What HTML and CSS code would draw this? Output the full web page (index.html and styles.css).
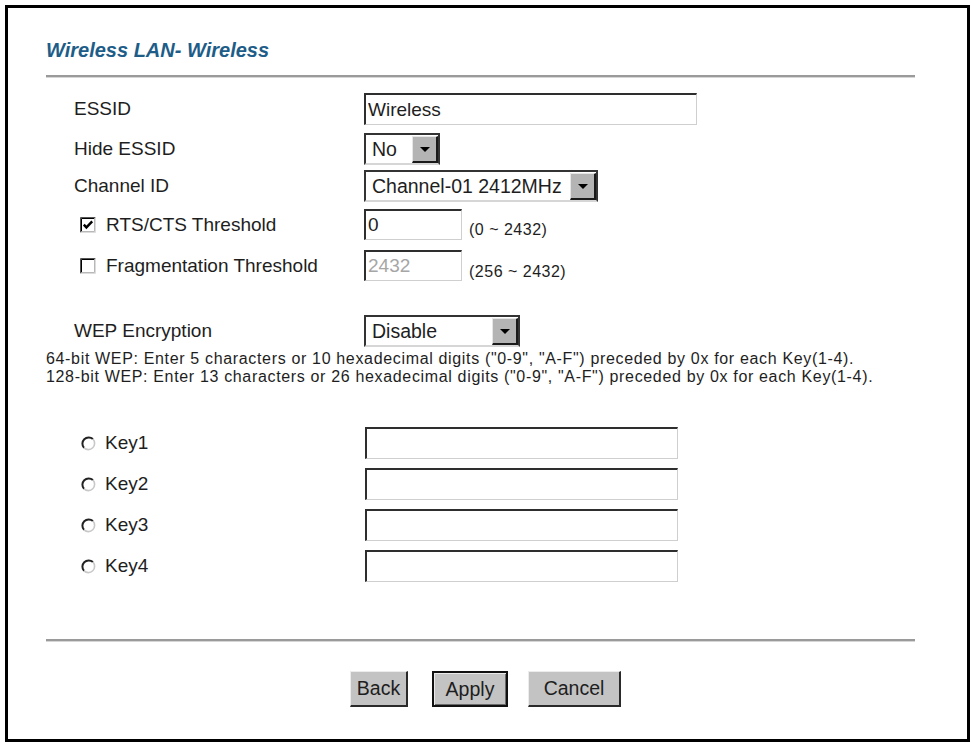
FILE: index.html
```html
<!DOCTYPE html>
<html lang="en">
<head>
<meta charset="utf-8">
<title>Wireless LAN- Wireless</title>
<link rel="stylesheet" href="styles.css">
</head>
<body>
<div class="frame">
  <h1 class="title">Wireless LAN- Wireless</h1>
  <div class="rule"></div>

  <div class="form">
    <div class="row">
      <div class="label">ESSID</div>
      <input class="text w-essid" type="text" value="Wireless">
    </div>
    <div class="row r-hide">
      <div class="label">Hide ESSID</div>
      <div class="select w-no"><span class="val">No</span><span class="arrow"><i></i></span></div>
    </div>
    <div class="row r-channel">
      <div class="label">Channel ID</div>
      <div class="select w-channel"><span class="val">Channel-01 2412MHz</span><span class="arrow"><i></i></span></div>
    </div>
    <div class="row r-rts">
      <div class="label label-check">
        <svg class="checkbox" width="16" height="16" viewBox="0 0 16 16">
          <rect x="0" y="0" width="16" height="16" fill="#ffffff"/>
          <path d="M0.5 15.5V0.5H15.5" fill="none" stroke="#555"/>
          <path d="M1.5 14.5V1.5H14.5" fill="none" stroke="#000"/>
          <path d="M0.5 15.5H15.5V0.5" fill="none" stroke="#dcdcdc"/>
          <path d="M1.5 14.5H14.5V1.5" fill="none" stroke="#b8b8b8"/>
          <path d="M3.8 7.6L6.4 10.4L12.2 4.4" fill="none" stroke="#000" stroke-width="2.4"/>
        </svg>
        <span>RTS/CTS Threshold</span>
      </div>
      <input class="text w-num" type="text" value="0">
      <span class="range">(0 ~ 2432)</span>
    </div>
    <div class="row r-frag">
      <div class="label label-check">
        <svg class="checkbox" width="16" height="16" viewBox="0 0 16 16">
          <rect x="0" y="0" width="16" height="16" fill="#ffffff"/>
          <path d="M0.5 15.5V0.5H15.5" fill="none" stroke="#555"/>
          <path d="M1.5 14.5V1.5H14.5" fill="none" stroke="#000"/>
          <path d="M0.5 15.5H15.5V0.5" fill="none" stroke="#dcdcdc"/>
          <path d="M1.5 14.5H14.5V1.5" fill="none" stroke="#b8b8b8"/>
        </svg>
        <span>Fragmentation Threshold</span>
      </div>
      <input class="text w-num disabled" type="text" value="2432" disabled>
      <span class="range range-low">(256 ~ 2432)</span>
    </div>
    <div class="row r-wep">
      <div class="label">WEP Encryption</div>
      <div class="select w-wep"><span class="val">Disable</span><span class="arrow"><i></i></span></div>
    </div>
  </div>

  <p class="notes">64-bit WEP: Enter 5 characters or 10 hexadecimal digits ("0-9", "A-F") preceded by 0x for each Key(1-4).<br>128-bit WEP: Enter 13 characters or 26 hexadecimal digits ("0-9", "A-F") preceded by 0x for each Key(1-4).</p>

  <div class="keys">
    <div class="row key">
      <div class="label label-radio">
        <svg class="radio" width="15" height="15" viewBox="0 0 15 15"><circle cx="7.5" cy="7.5" r="6.3" fill="#fff"/><path d="M3.05 11.95A6.3 6.3 0 0 1 11.95 3.05" fill="none" stroke="#222" stroke-width="2"/><path d="M11.95 3.05A6.3 6.3 0 0 1 3.05 11.95" fill="none" stroke="#c8c8c8" stroke-width="1.6"/></svg>
        <span>Key1</span>
      </div>
      <input class="text w-key" type="text" value="">
    </div>
    <div class="row key">
      <div class="label label-radio">
        <svg class="radio" width="15" height="15" viewBox="0 0 15 15"><circle cx="7.5" cy="7.5" r="6.3" fill="#fff"/><path d="M3.05 11.95A6.3 6.3 0 0 1 11.95 3.05" fill="none" stroke="#222" stroke-width="2"/><path d="M11.95 3.05A6.3 6.3 0 0 1 3.05 11.95" fill="none" stroke="#c8c8c8" stroke-width="1.6"/></svg>
        <span>Key2</span>
      </div>
      <input class="text w-key" type="text" value="">
    </div>
    <div class="row key">
      <div class="label label-radio">
        <svg class="radio" width="15" height="15" viewBox="0 0 15 15"><circle cx="7.5" cy="7.5" r="6.3" fill="#fff"/><path d="M3.05 11.95A6.3 6.3 0 0 1 11.95 3.05" fill="none" stroke="#222" stroke-width="2"/><path d="M11.95 3.05A6.3 6.3 0 0 1 3.05 11.95" fill="none" stroke="#c8c8c8" stroke-width="1.6"/></svg>
        <span>Key3</span>
      </div>
      <input class="text w-key" type="text" value="">
    </div>
    <div class="row key">
      <div class="label label-radio">
        <svg class="radio" width="15" height="15" viewBox="0 0 15 15"><circle cx="7.5" cy="7.5" r="6.3" fill="#fff"/><path d="M3.05 11.95A6.3 6.3 0 0 1 11.95 3.05" fill="none" stroke="#222" stroke-width="2"/><path d="M11.95 3.05A6.3 6.3 0 0 1 3.05 11.95" fill="none" stroke="#c8c8c8" stroke-width="1.6"/></svg>
        <span>Key4</span>
      </div>
      <input class="text w-key" type="text" value="">
    </div>
  </div>

  <div class="rule rule-bottom"></div>

  <div class="buttons">
    <button class="btn btn-back" type="button">Back</button>
    <button class="btn btn-apply" type="button">Apply</button>
    <button class="btn btn-cancel" type="button">Cancel</button>
  </div>
</div>
</body>
</html>
```

FILE: styles.css
```css
html, body {
  margin: 0;
  padding: 0;
  background: #ffffff;
}

body {
  font-family: "Liberation Sans", Arial, sans-serif;
  color: #1e1e1e;
}

.frame {
  box-sizing: border-box;
  width: 965px;
  height: 737px;
  margin: 5px 0 0 5px;
  border: 3px solid #000;
  padding: 33px 52px 0 38px;
}

.title {
  margin: 0;
  font-size: 20px;
  line-height: 18px;
  height: 18px;
  font-weight: bold;
  font-style: italic;
  color: #1d5d88;
}

.rule {
  height: 2px;
  margin-top: 16px;
  background: #9a9a9a;
  box-shadow: 0 1px 0 #d6d6d6;
}

.rule-bottom {
  margin-top: 57px;
}

.form {
  margin-top: 16px;
}

.row {
  display: flex;
  align-items: center;
}

.r-hide { margin-top: 8px; }
.r-channel { margin-top: 5px; }
.r-rts { margin-top: 7px; align-items: flex-end; }
.r-frag { margin-top: 10px; align-items: flex-end; }
.r-wep { margin-top: 34px; }

.label {
  box-sizing: border-box;
  width: 318px;
  padding-left: 28px;
  font-size: 19px;
  line-height: 22px;
  align-self: center;
  display: flex;
  align-items: center;
}

.label-check {
  padding-left: 34px;
}

.checkbox {
  flex: none;
  margin-right: 10px;
}

.label-radio {
  padding-left: 35px;
}

.radio {
  flex: none;
  margin-right: 9px;
}

.text {
  box-sizing: border-box;
  height: 32px;
  margin: 0;
  padding: 0 2px;
  border-style: solid;
  border-width: 2px 1px 1px 2px;
  border-color: #2e2e2e #cfcfcf #cfcfcf #2e2e2e;
  background: #fff;
  font-family: "Liberation Sans", Arial, sans-serif;
  font-size: 19px;
  color: #1e1e1e;
  outline: none;
}

.w-essid { width: 333px; }
.w-num { width: 98px; height: 31px; }
.w-key { width: 313px; margin-left: 1px; }

.text.disabled {
  color: #a6a6a6;
  -webkit-text-fill-color: #a6a6a6;
  opacity: 1;
}

.range {
  margin-left: 7px;
  margin-bottom: 1px;
  font-size: 16px;
  line-height: 18px;
  letter-spacing: 0.5px;
}

.range-low {
  margin-bottom: 0;
}

.select {
  box-sizing: border-box;
  height: 32px;
  display: flex;
  align-items: stretch;
  border-style: solid;
  border-width: 2px;
  border-color: #333 #333 #d6d6d6 #333;
  background: #fff;
}

.select .val {
  flex: 1;
  padding-left: 6px;
  font-size: 19.5px;
  line-height: 28px;
  white-space: nowrap;
}

.select .arrow {
  box-sizing: border-box;
  width: 26px;
  margin: 1px 0 0 0;
  background: #b4b4b4;
  border-style: solid;
  border-width: 1px 2px 2px 1px;
  border-color: #e6e6e6 #1a1a1a #1a1a1a #e6e6e6;
  display: flex;
  align-items: center;
  justify-content: center;
}

.select .arrow i {
  display: block;
  width: 0;
  height: 0;
  border-left: 5px solid transparent;
  border-right: 5px solid transparent;
  border-top: 5px solid #000;
  margin-top: 1px;
}

.w-no { width: 76px; }
.w-channel { width: 234px; }
.w-wep { width: 156px; }

.notes {
  margin: 3px 0 0 0;
  font-size: 16px;
  line-height: 18px;
  letter-spacing: 0.66px;
  white-space: nowrap;
}

.keys {
  margin-top: 41px;
}

.key + .key {
  margin-top: 9px;
}

.buttons {
  margin-top: 30px;
  display: flex;
  padding-left: 304px;
}

.btn {
  box-sizing: border-box;
  height: 36px;
  margin: 0;
  padding: 0;
  background: #c3c3c3;
  font-family: "Liberation Sans", Arial, sans-serif;
  font-size: 19.5px;
  color: #1e1e1e;
  border-style: solid;
  border-width: 1px 2px 2px 1px;
  border-color: #ececec #2a2a2a #2a2a2a #ececec;
}

.btn-back { width: 58px; }

.btn-apply {
  width: 76px;
  margin-left: 24px;
  border: 2px solid #111;
  box-shadow: inset 1px 1px 0 #eaeaea, inset -1px -1px 0 #6a6a6a;
}

.btn-cancel {
  width: 93px;
  margin-left: 20px;
}
```
